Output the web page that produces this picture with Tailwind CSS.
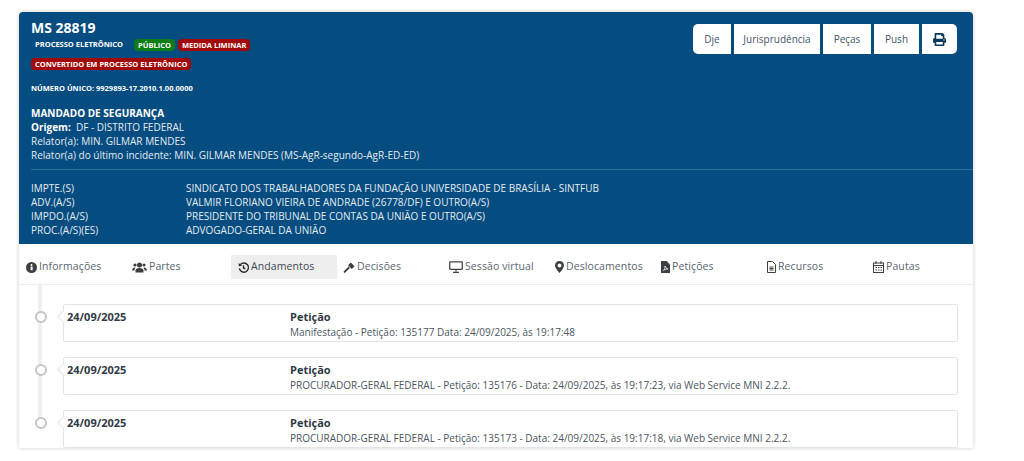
<!DOCTYPE html>
<html lang="pt-BR">
  <head>
    <meta charset="UTF-8" />
    <title>MS 28819</title>
    <script src="https://cdn.jsdelivr.net/npm/@tailwindcss/browser@4"></script>
  </head>
  <body class="bg-white h-[461px] overflow-hidden font-['Open_Sans',sans-serif]">
    <div class="ml-[19px] mt-[12px] w-[954px] rounded-t-[4px] shadow-[0_0_4px_rgba(0,0,0,0.2)] bg-white">
      <!-- cabecalho azul -->
      <div class="bg-[#054c80] h-[232px] rounded-t-[4px] text-[#e4ebf1] px-[12px] relative">
        <div class="absolute right-[16px] top-[12px] flex gap-[3px] text-[10px] text-[#3f5468]">
          <button class="h-[30px] w-[38px] bg-white rounded-l-[5px]">Dje</button>
          <button class="h-[30px] w-[86px] bg-white">Jurisprudência</button>
          <button class="h-[30px] w-[48px] bg-white">Peças</button>
          <button class="h-[30px] w-[45px] bg-white">Push</button>
          <button class="h-[30px] w-[35px] bg-white rounded-r-[5px] flex items-center justify-center">
            <svg class="w-[13px] h-[13px] text-[#0d3a5c]" viewBox="0 0 512 512" fill="currentColor"><path d="M448 192V77.25c0-8.49-3.37-16.62-9.37-22.63L393.37 9.37c-6-6-14.14-9.37-22.63-9.37H96C78.33 0 64 14.33 64 32v160c-35.35 0-64 28.65-64 64v112c0 8.84 7.16 16 16 16h48v96c0 17.67 14.33 32 32 32h320c17.67 0 32-14.33 32-32v-96h48c8.84 0 16-7.16 16-16V256c0-35.35-28.65-64-64-64zm-64 256H128v-96h256v96zm0-224H128V64h192v48c0 8.84 7.16 16 16 16h48v96zm48 72c-13.25 0-24-10.75-24-24 0-13.26 10.75-24 24-24s24 10.74 24 24c0 13.25-10.75 24-24 24z"/></svg>
          </button>
        </div>

        <div class="pt-[7px] text-[14px] leading-[17px] font-bold text-white">MS 28819</div>
        <div class="flex items-center mt-[3px] h-[12px] text-[7.5px] font-bold text-white">
          <span class="px-[4px] mr-[7px]">PROCESSO ELETRÔNICO</span>
          <span class="px-[4px] mr-[3px] h-[12px] leading-[12px] rounded-[4px] bg-[#0a7d14]">PÚBLICO</span>
          <span class="px-[4px] h-[12px] leading-[12px] rounded-[4px] bg-[#a20808]">MEDIDA LIMINAR</span>
        </div>
        <div class="flex mt-[7px] h-[12px] text-[7.5px] font-bold text-white">
          <span class="px-[4px] h-[12px] leading-[12px] rounded-[4px] bg-[#a20808]">CONVERTIDO EM PROCESSO ELETRÔNICO</span>
        </div>
        <div class="mt-[12px] text-[7.5px] leading-[12px] font-bold text-white">NÚMERO ÚNICO: 9929893-17.2010.1.00.0000</div>
        <div class="mt-[12px] text-[10px] leading-[14px]">
          <div class="font-bold text-white">MANDADO DE SEGURANÇA</div>
          <div><span class="font-bold text-white">Origem:</span>&nbsp; DF - DISTRITO FEDERAL</div>
          <div>Relator(a): MIN. GILMAR MENDES</div>
          <div>Relator(a) do último incidente: MIN. GILMAR MENDES (MS-AgR-segundo-AgR-ED-ED)</div>
        </div>
        <div class="absolute left-[12px] right-0 top-[157px] border-t border-[#2f6d99]"></div>
        <div class="absolute left-[12px] top-[169px] text-[10px] leading-[14px] grid grid-cols-[155px_1fr]">
          <div>IMPTE.(S)</div><div>SINDICATO DOS TRABALHADORES DA FUNDAÇÃO UNIVERSIDADE DE BRASÍLIA - SINTFUB</div>
          <div>ADV.(A/S)</div><div>VALMIR FLORIANO VIEIRA DE ANDRADE (26778/DF) E OUTRO(A/S)</div>
          <div>IMPDO.(A/S)</div><div>PRESIDENTE DO TRIBUNAL DE CONTAS DA UNIÃO E OUTRO(A/S)</div>
          <div>PROC.(A/S)(ES)</div><div>ADVOGADO-GERAL DA UNIÃO</div>
        </div>
      </div>

      <!-- abas -->
      <div class="flex h-[41px] border-b border-[#eeeeee] text-[10.5px] text-[#5a6570] tracking-[0.1px]">
        <div class="w-[106px] pt-[11px]"><div class="flex items-center gap-[2px] h-[24px] pl-[7px]">
          <svg class="w-[11px] h-[11px] text-[#3c3f42]" viewBox="0 0 24 24" fill="currentColor"><circle cx="12" cy="12" r="12"/><rect x="10" y="10" width="4.5" height="8" fill="#fff"/><circle cx="12" cy="6.5" r="2.2" fill="#fff"/></svg>Informações</div></div>
        <div class="w-[106px] pt-[11px]"><div class="flex items-center gap-[2px] h-[24px] pl-[113px] -ml-[106px] w-[212px]">
          <svg class="w-[15px] h-[11px] text-[#3c3f42]" viewBox="0 0 30 22" fill="currentColor"><circle cx="15" cy="6" r="5"/><circle cx="6" cy="6" r="3.2"/><circle cx="24" cy="6" r="3.2"/><path d="M7 21v-4c0-3 3-5 8-5s8 2 8 5v4z"/><path d="M0 17c0-3 2-6 6-6l1 1c-1 1-2 3-2 5H0zM30 17c0-3-2-6-6-6l-1 1c1 1 2 3 2 5h5z"/></svg>Partes</div></div>
        <div class="w-[106px] pt-[11px]"><div class="flex items-center gap-[2px] h-[24px] pl-[7px] bg-[#eeeeee] text-[#3f4a54]">
          <svg class="w-[11px] h-[11px] text-[#2b2b2b]" viewBox="0 0 24 24" fill="none" stroke="currentColor" stroke-width="3"><path d="M5 6a10 10 0 1 1-2 8"/><path d="M1 2l1 7 7-1" fill="currentColor" stroke="none"/><path d="M12 7v6l4 2"/></svg>Andamentos</div></div>
        <div class="w-[106px] pt-[11px]"><div class="flex items-center gap-[2px] h-[24px] pl-[6px]">
          <svg class="w-[12px] h-[11px] text-[#3c3f42]" viewBox="0 0 24 24" fill="currentColor"><path d="M1 20l10-10 3 3-10 10a2 2 0 0 1-3-3z"/><path d="M10 7l6-6 8 8-6 6z"/></svg>Decisões</div></div>
        <div class="w-[106px] pt-[11px]"><div class="flex items-center gap-[2px] h-[24px] pl-[6px]">
          <svg class="w-[14px] h-[12px] text-[#3c3f42]" viewBox="0 0 28 24" fill="none" stroke="currentColor" stroke-width="2.5"><rect x="1.5" y="1.5" width="25" height="15" rx="1"/><path d="M14 17v4M8 22.5h12"/></svg>Sessão virtual</div></div>
        <div class="w-[106px] pt-[11px]"><div class="flex items-center gap-[2px] h-[24px] pl-[6px]">
          <svg class="w-[9px] h-[12px] text-[#3c3f42]" viewBox="0 0 18 24" fill="currentColor" fill-rule="evenodd"><path d="M9 0a9 9 0 0 1 9 9c0 5-9 15-9 15S0 14 0 9a9 9 0 0 1 9-9zm0 5a4 4 0 1 0 0 8 4 4 0 0 0 0-8z"/></svg>Deslocamentos</div></div>
        <div class="w-[106px] pt-[11px]"><div class="flex items-center gap-[2px] h-[24px] pl-[6px]">
          <svg class="w-[9px] h-[12px] text-[#3c3f42]" viewBox="0 0 18 24" fill="currentColor"><path d="M0 0h11l7 7v17H0z"/><path d="M5 19c2-2 3-6 3-9 1 3 3 5 6 6-3 0-6 1-9 3z" fill="none" stroke="#fff" stroke-width="1.5"/></svg>Petições</div></div>
        <div class="w-[106px] pt-[11px]"><div class="flex items-center gap-[2px] h-[24px] pl-[6px]">
          <svg class="w-[9px] h-[12px] text-[#3c3f42]" viewBox="0 0 18 24" fill="none" stroke="currentColor" stroke-width="2"><path d="M1 1h10l6 6v16H1z"/><path d="M5 12h8M5 15h8M5 18h8"/></svg>Recursos</div></div>
        <div class="w-[106px] pt-[11px]"><div class="flex items-center gap-[2px] h-[24px] pl-[6px]">
          <svg class="w-[11px] h-[12px] text-[#3c3f42]" viewBox="0 0 22 24" fill="none" stroke="currentColor" stroke-width="2"><rect x="1" y="4" width="20" height="19"/><path d="M1 9h20M6 0v6M16 0v6" /><path d="M5 13h3M10 13h3M15 13h3M5 18h3M10 18h3M15 18h3"/></svg>Pautas</div></div>
      </div>

      <!-- andamentos -->
      <div class="relative pl-[44px] pr-[15px] pt-[19px] flex flex-col gap-[15px] text-[#4a5560]">
        <div class="absolute left-[19px] top-0 w-[4px] h-[140px] bg-[#f0f0f0]"></div>

        <div class="relative h-[38px] border border-[#e4e4e4] rounded-[2px] flex text-[10px] leading-[14px]">
          <div class="absolute -left-[29px] top-[6px] w-[12px] h-[12px] rounded-full bg-white border-2 border-[#c4c4c4]"></div>
          <div class="absolute -left-[5px] top-[7px] w-[9px] h-[9px] rotate-45 bg-white border-l border-b border-[#e4e4e4]"></div>
          <div class="w-[226px] pl-[3px] pt-[5px] font-bold text-[11px] text-[#2f3a44]">24/09/2025</div>
          <div class="pt-[5px]"><div class="font-bold text-[11px] text-[#2f3a44]">Petição</div><div class="mt-[1px]">Manifestação - Petição: 135177 Data: 24/09/2025, às 19:17:48</div></div>
        </div>
        <div class="relative h-[38px] border border-[#e4e4e4] rounded-[2px] flex text-[10px] leading-[14px]">
          <div class="absolute -left-[29px] top-[6px] w-[12px] h-[12px] rounded-full bg-white border-2 border-[#c4c4c4]"></div>
          <div class="absolute -left-[5px] top-[7px] w-[9px] h-[9px] rotate-45 bg-white border-l border-b border-[#e4e4e4]"></div>
          <div class="w-[226px] pl-[3px] pt-[5px] font-bold text-[11px] text-[#2f3a44]">24/09/2025</div>
          <div class="pt-[5px]"><div class="font-bold text-[11px] text-[#2f3a44]">Petição</div><div class="mt-[1px]">PROCURADOR-GERAL FEDERAL - Petição: 135176 - Data: 24/09/2025, às 19:17:23, via Web Service MNI 2.2.2.</div></div>
        </div>
        <div class="relative h-[38px] border border-[#e4e4e4] rounded-[2px] flex text-[10px] leading-[14px]">
          <div class="absolute -left-[29px] top-[6px] w-[12px] h-[12px] rounded-full bg-white border-2 border-[#c4c4c4]"></div>
          <div class="absolute -left-[5px] top-[7px] w-[9px] h-[9px] rotate-45 bg-white border-l border-b border-[#e4e4e4]"></div>
          <div class="w-[226px] pl-[3px] pt-[5px] font-bold text-[11px] text-[#2f3a44]">24/09/2025</div>
          <div class="pt-[5px]"><div class="font-bold text-[11px] text-[#2f3a44]">Petição</div><div class="mt-[1px]">PROCURADOR-GERAL FEDERAL - Petição: 135173 - Data: 24/09/2025, às 19:17:18, via Web Service MNI 2.2.2.</div></div>
        </div>
      </div>
    </div>
  </body>
</html>
